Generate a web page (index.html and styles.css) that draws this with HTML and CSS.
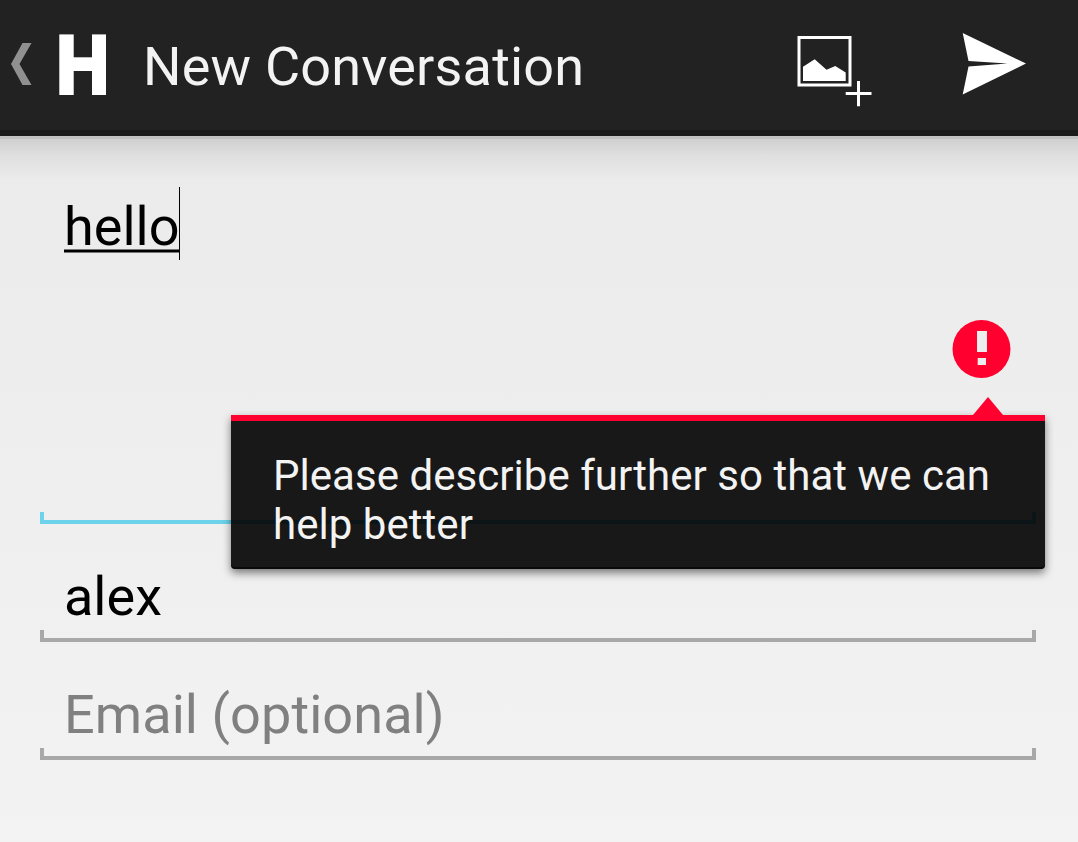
FILE: index.html
```html
<!DOCTYPE html>
<html lang="en">
<head>
<meta charset="utf-8">
<title>New Conversation</title>
<link rel="stylesheet" href="styles.css">
</head>
<body>
<header class="action-bar">
  <svg class="up" width="22" height="42" viewBox="0 0 22 42" aria-hidden="true"><path d="M11.500 0H20.500L8.500 21 20.500 42h-9L0 21z"/></svg>
  <svg class="logo" width="48" height="61" viewBox="0 0 48 61" role="img" aria-label="H"><rect x=".3" y=".4" width="14.400" height="60.600"/><rect x="33" y=".4" width="14" height="60.600"/><rect x="14" y="23.300" width="20" height="13.700"/></svg>
  <h1 class="title">New Conversation</h1>
  <button class="action attach" aria-label="Attach picture">
    <svg width="76" height="74" viewBox="0 0 76 74"><path class="frame" d="M2 4.500h51v47.500H2z"/><path d="M6 33.700 17.700 26.300 29.500 36.800 38.300 33 48.700 39.500V48H6z"/><path d="M60 48h3v11h11.500v3H63v11.300h-3V62H48.700v-3H60z"/></svg>
  </button>
  <button class="action send" aria-label="Send">
    <svg width="64" height="63" viewBox="0 0 64 63"><path d="M.7 0 64 30.500 .7 61.600 6.500 33.500 45.500 30.500 6.500 28z"/></svg>
  </button>
</header>
<main class="form">
  <div class="field message focused">
    <span class="composing">hello</span><span class="caret"></span>
    <svg class="error-icon" width="59" height="58" viewBox="0 0 59 58" aria-hidden="true"><circle cx="29.500" cy="29" r="29"/><path d="M25 11h10v21H25zM25.700 38h8.300v7h-8.300z"/></svg>
  </div>
  <div class="field">alex</div>
  <div class="field hint">Email (optional)</div>
  <div class="error-popup" role="alert">Please describe further so that we can help better</div>
</main>
</body>
</html>
```

FILE: styles.css
```css
* { box-sizing: border-box; }

body {
  margin: 0;
  height: 842px;
  overflow: hidden;
  background: linear-gradient(#e9e9e9, #f3f3f3);
  font-family: Roboto, sans-serif;
  font-size: 54px;
  line-height: 63px;
  color: #000;
}

.action-bar {
  display: flex;
  align-items: flex-start;
  height: 136px;
  padding-left: 11px;
  background: #222;
  border-bottom: 6px solid #1a1a1a;
}

.up { margin-top: 43px; fill: #909090; }
.logo { margin: 34px 0 0 26px; fill: #fff; }

.title {
  flex: 1;
  margin: 35px 0 0 36px;
  font-size: 54px;
  font-weight: 400;
  letter-spacing: .19px;
  color: #f3f3f3;
  white-space: nowrap;
}

.action {
  padding: 0;
  border: 0;
  background: none;
  fill: #fff;
}
.action svg { display: block; }
.attach { margin: 33px 89px 0 0; }
.send { margin: 33px 52px 0 0; }
.frame { fill: none; stroke: #fff; stroke-width: 3; }

.form {
  position: relative;
  height: 706px;
  padding: 0 42px 0 40px;
  background: linear-gradient(#c1c1c1 0 3px, rgba(0, 0, 0, .115) 3px, rgba(0, 0, 0, .05) 20px, transparent 44px);
}

.field {
  --line: #a8a8a8;
  height: 118px;
  padding: 41px 25px 0 24px;
  background:
    linear-gradient(var(--line), var(--line)) left bottom / 4px 12px no-repeat,
    linear-gradient(var(--line), var(--line)) right bottom / 4px 12px no-repeat,
    linear-gradient(var(--line), var(--line)) left bottom / 100% 4px no-repeat;
}

.message {
  display: flex;
  align-items: flex-start;
  height: 388px;
  padding-top: 51px;
}
.focused { --line: #6dd3ea; }
.hint { color: #808080; letter-spacing: .08px; }

.composing {
  height: 66px;
  margin-top: 8px;
  background: linear-gradient(rgba(0, 0, 0, .5) 1px, #000 1px 3px, rgba(0, 0, 0, .5) 3px) left 54px / 100% 4px no-repeat;
}
.caret { width: 1px; height: 73px; background: #000; }

.error-icon {
  margin: 133px 0 0 auto;
  fill: #ff002f;
}
.error-icon path { fill: #ededed; }

.error-popup {
  position: absolute;
  top: 279px;
  left: 231px;
  width: 814px;
  height: 154px;
  padding: 30px 42px 0;
  border-top: 6px solid #ff002f;
  border-radius: 0 0 4px 4px;
  background: rgba(0, 0, 0, .9);
  background-clip: padding-box;
  box-shadow: inset 0 -2px 0 rgba(0, 0, 0, .6), 0 4px 8px rgba(0, 0, 0, .5);
  color: #f3f3f3;
  font-size: 42px;
  line-height: 49px;
  letter-spacing: .04px;
}
.error-popup::before {
  content: "";
  position: absolute;
  top: -24px;
  right: 42px;
  width: 30px;
  height: 18px;
  background: #ff002f;
  clip-path: polygon(50% 0, 100% 100%, 0 100%);
}
```
